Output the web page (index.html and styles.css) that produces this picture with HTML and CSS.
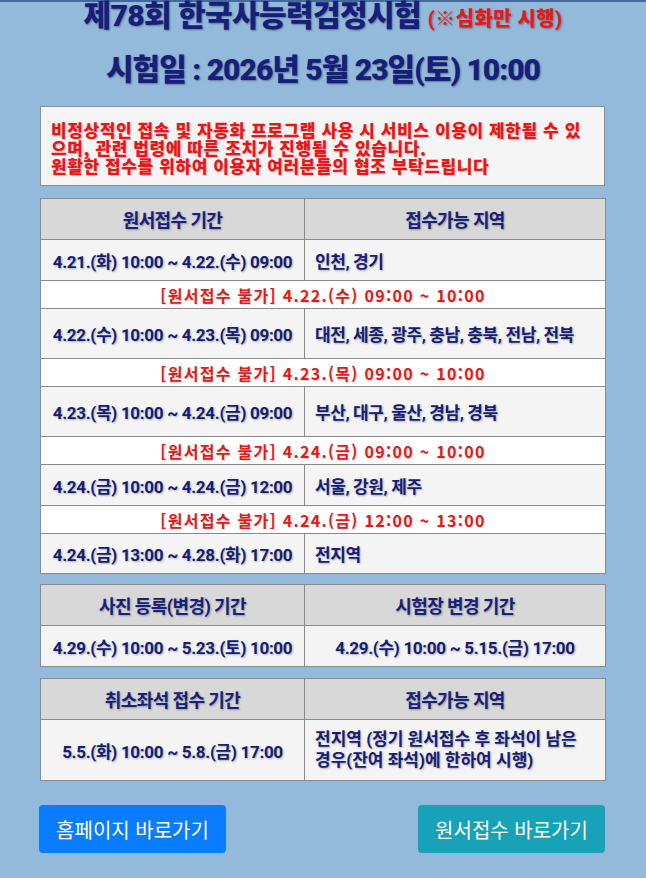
FILE: index.html
```html
<!DOCTYPE html>
<html lang="ko">
<head>
<meta charset="utf-8">
<title>제78회 한국사능력검정시험</title>
<link rel="stylesheet" href="styles.css">
</head>
<body>
<div class="page">
  <h1 class="title">제78회 한국사능력검정시험 <span class="title-note">(※심화만 시행)</span></h1>
  <h2 class="exam-date">시험일 : 2026년 5월 23일(토) 10:00</h2>

  <div class="notice">
    <p>비정상적인 접속 및 자동화 프로그램 사용 시 서비스 이용이 제한될 수 있</p>
    <p>으며, 관련 법령에 따른 조치가 진행될 수 있습니다.</p>
    <p>원활한 접수를 위하여 이용자 여러분들의 협조 부탁드립니다</p>
  </div>

  <table class="sched first">
    <colgroup><col class="c1"><col class="c2"></colgroup>
    <tr class="head"><th>원서접수 기간</th><th>접수가능 지역</th></tr>
    <tr class="row h41"><td class="date">4.21.(화) 10:00 ~ 4.22.(수) 09:00</td><td class="area">인천, 경기</td></tr>
    <tr class="closed"><td colspan="2">[원서접수 불가] 4.22.(수) 09:00 ~ 10:00</td></tr>
    <tr class="row h50"><td class="date">4.22.(수) 10:00 ~ 4.23.(목) 09:00</td><td class="area">대전, 세종, 광주, 충남, 충북, 전남, 전북</td></tr>
    <tr class="closed"><td colspan="2">[원서접수 불가] 4.23.(목) 09:00 ~ 10:00</td></tr>
    <tr class="row h50"><td class="date">4.23.(목) 10:00 ~ 4.24.(금) 09:00</td><td class="area">부산, 대구, 울산, 경남, 경북</td></tr>
    <tr class="closed"><td colspan="2">[원서접수 불가] 4.24.(금) 09:00 ~ 10:00</td></tr>
    <tr class="row h41"><td class="date">4.24.(금) 10:00 ~ 4.24.(금) 12:00</td><td class="area">서울, 강원, 제주</td></tr>
    <tr class="closed"><td colspan="2">[원서접수 불가] 4.24.(금) 12:00 ~ 13:00</td></tr>
    <tr class="row h40"><td class="date">4.24.(금) 13:00 ~ 4.28.(화) 17:00</td><td class="area">전지역</td></tr>
  </table>

  <table class="sched">
    <colgroup><col class="c1"><col class="c2"></colgroup>
    <tr class="head"><th>사진 등록(변경) 기간</th><th>시험장 변경 기간</th></tr>
    <tr class="row h41"><td class="date">4.29.(수) 10:00 ~ 5.23.(토) 10:00</td><td class="date">4.29.(수) 10:00 ~ 5.15.(금) 17:00</td></tr>
  </table>

  <table class="sched third">
    <colgroup><col class="c1"><col class="c2"></colgroup>
    <tr class="head"><th>취소좌석 접수 기간</th><th>접수가능 지역</th></tr>
    <tr class="row h61"><td class="date">5.5.(화) 10:00 ~ 5.8.(금) 17:00</td><td class="area two-line">전지역 (정기 원서접수 후 좌석이 남은<br>경우(잔여 좌석)에 한하여 시행)</td></tr>
  </table>

  <div class="actions">
    <a class="btn btn-primary" href="#">홈페이지 바로가기</a>
    <a class="btn btn-info" href="#">원서접수 바로가기</a>
  </div>
</div>
</body>
</html>
```

FILE: styles.css
```css
html, body {
  margin: 0;
  padding: 0;
}

body {
  background: #94badb;
  font-family: "Noto Sans CJK KR", "Noto Sans", sans-serif;
}

.page {
  min-height: 876px;
  border-top: 2px solid #46699b;
  display: flex;
  flex-direction: column;
  align-items: flex-start;
  padding-left: 40px;
}

.title {
  align-self: stretch;
  margin: -1px 0 0 -40px;
  height: 30px;
  line-height: 30px;
  text-align: center;
  font-family: "Roboto", "Noto Sans CJK KR", sans-serif;
  font-size: 30px;
  font-weight: 900;
  letter-spacing: -0.6px;
  color: #16207c;
  text-shadow: 1px 1px 2px rgba(0, 0, 0, 0.35);
  white-space: nowrap;
}

.title-note {
  font-size: 20px;
  letter-spacing: 0.4px;
  color: #e31b1b;
}

.exam-date {
  align-self: stretch;
  margin: 19px 0 0 -40px;
  height: 40px;
  line-height: 40px;
  text-align: center;
  font-family: "Roboto", "Noto Sans CJK KR", sans-serif;
  font-size: 30px;
  font-weight: 900;
  letter-spacing: -1px;
  color: #16207c;
  text-shadow: 1px 1px 2px rgba(0, 0, 0, 0.35);
  white-space: nowrap;
}

.notice {
  box-sizing: border-box;
  width: 565px;
  height: 80px;
  margin-top: 16px;
  padding: 14px 0 0 10px;
  background: #f5f5f5;
  border: 1px solid #8e8e8e;
}

.notice p {
  margin: 0;
  font-size: 17px;
  line-height: 18px;
  font-weight: 900;
  letter-spacing: 0.6px;
  color: #e8161b;
  text-shadow: 1px 1px 1px rgba(120, 0, 0, 0.25);
  white-space: nowrap;
}

.sched {
  width: 565px;
  margin-top: 10px;
  border-collapse: collapse;
  table-layout: fixed;
  border: 1px solid #8a8a8a;
}

.sched.first {
  margin-top: 12px;
}

.sched.third {
  margin-top: 11px;
}

.c1 { width: 264px; }
.c2 { width: 301px; }

.sched th,
.sched td {
  padding: 0;
  border: 1px solid #8a8a8a;
  font-weight: 700;
  white-space: nowrap;
}

.head th {
  height: 40px;
  background: #d8d8d8;
  font-family: "Roboto", "Noto Sans CJK KR", sans-serif;
  font-size: 18px;
  letter-spacing: -0.6px;
  color: #17207a;
  text-shadow: 1px 1px 2px rgba(0, 0, 0, 0.3);
  text-align: center;
}

.row td {
  background: #f4f4f4;
  font-family: "Roboto", "Noto Sans CJK KR", sans-serif;
  font-size: 17px;
  letter-spacing: -0.3px;
  color: #151d74;
  text-shadow: 1px 1px 2px rgba(0, 0, 0, 0.3);
}

.h40 td { height: 39px; }
.h41 td { height: 40px; }
.h50 td { height: 49px; }
.h61 td { height: 60px; }

.date {
  text-align: center;
}

.area {
  text-align: left;
  padding-left: 10px !important;
  letter-spacing: -0.4px !important;
}

.two-line {
  line-height: 21px;
  letter-spacing: 0 !important;
}

.closed td {
  height: 27px;
  background: #ffffff;
  text-align: center;
  font-size: 16px;
  letter-spacing: 1.3px;
  color: #d81f1f;
  text-shadow: 1px 1px 1px rgba(100, 0, 0, 0.2);
}

.actions {
  box-sizing: border-box;
  width: 566px;
  margin: 24px 0 0 -1px;
  display: flex;
  justify-content: space-between;
}

.btn {
  display: flex;
  align-items: center;
  justify-content: center;
  width: 187px;
  height: 48px;
  border-radius: 4px;
  color: #ffffff;
  text-decoration: none;
  font-size: 20px;
  font-weight: 400;
}

.btn-primary { background: #0a7cff; }
.btn-info { background: #18a2b8; }
```
